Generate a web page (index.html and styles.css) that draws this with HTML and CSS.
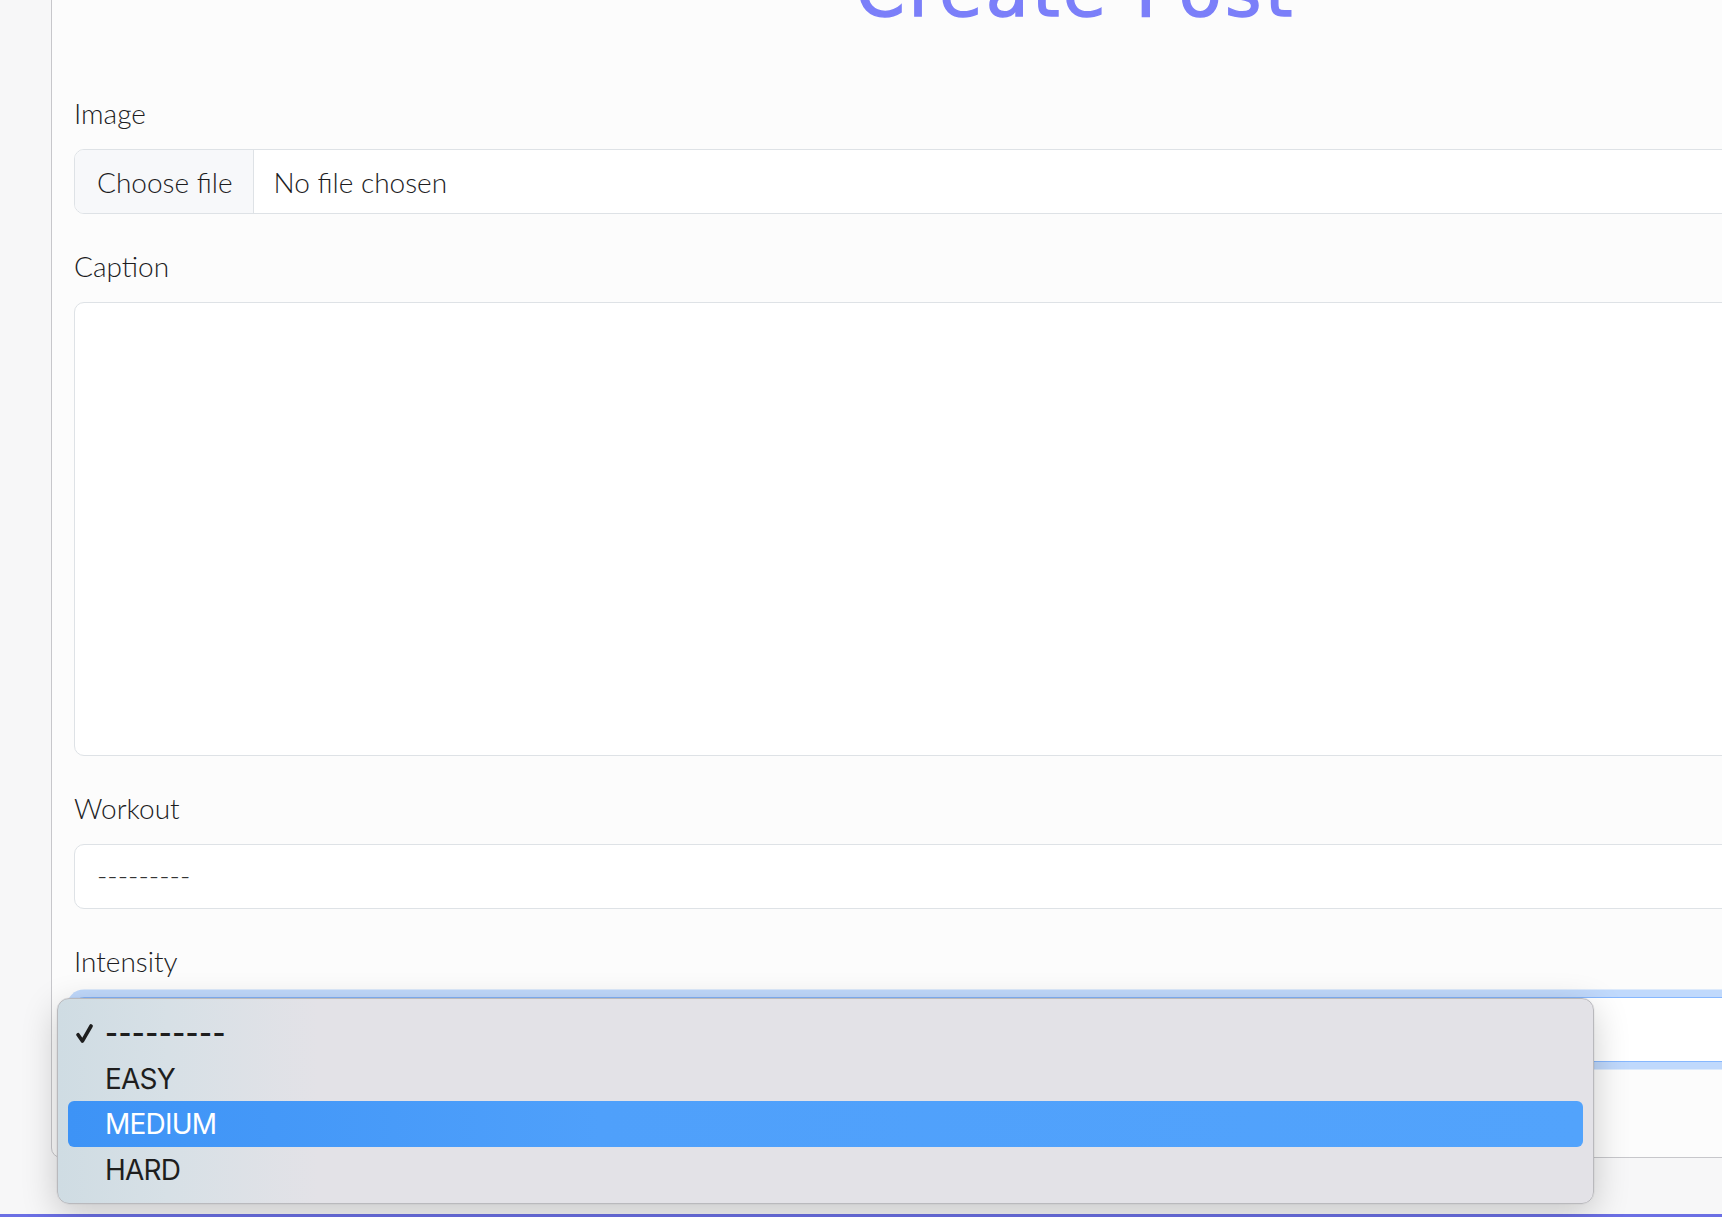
FILE: index.html
```html
<!DOCTYPE html>
<html lang="en">
<head>
  <meta charset="UTF-8">
  <meta name="viewport" content="width=device-width, initial-scale=1.0">
  <title>Create Post</title>
  <link rel="stylesheet" href="styles.css">
</head>
<body>
  <main class="page">
    <div class="post-card">
      <h1 class="post-title">Create Post</h1>

      <form class="post-form">
        <div class="field">
          <label class="field-label">Image</label>
          <div class="file-input">
            <span class="file-btn">Choose file</span>
            <span class="file-name">No file chosen</span>
          </div>
        </div>

        <div class="field">
          <label class="field-label">Caption</label>
          <textarea class="field-textarea"></textarea>
        </div>

        <div class="field">
          <label class="field-label">Workout</label>
          <div class="field-select">---------</div>
        </div>

        <div class="field">
          <label class="field-label">Intensity</label>
          <div class="select-wrap">
            <div class="field-select is-focused">---------</div>

            <!-- native popup, open -->
            <ul class="select-menu">
              <li class="menu-item is-checked">
                <svg class="check" viewBox="0 0 16 18" width="17" height="19">
                  <path d="M1.9 10.2 L6 16.2 L14.2 1.9" fill="none" stroke="#1e1e1e" stroke-width="3.4" stroke-linecap="round" stroke-linejoin="round"/>
                </svg>
                ---------
              </li>
              <li class="menu-item">EASY</li>
              <li class="menu-item is-active">MEDIUM</li>
              <li class="menu-item">HARD</li>
            </ul>
          </div>
        </div>
      </form>
    </div>
  </main>
  <footer class="site-footer"></footer>
</body>
</html>
```

FILE: styles.css
```css
html, body {
  margin: 0;
  height: 100%;
  overflow: hidden;
}
body {
  background-color: #f7f7f8;
  font-family: "Lato", "Open Sans", sans-serif;
  font-weight: 300;
  color: #1d1d1f;
}
.page {
  padding-left: 51px;
}
.post-card {
  width: 2050px;
  box-sizing: border-box;
  margin-top: -73px;
  margin-bottom: 56px;
  padding: 22px 22px 65px;
  background-color: #fcfcfc;
  border: 1px solid #c7c7cb;
  border-radius: 10px;
}
.post-title {
  margin: 0 0 57px;
  text-align: center;
  font-family: "DejaVu Sans", sans-serif;
  font-weight: 400;
  font-size: 70px;
  line-height: 84px;
  letter-spacing: 3.5px;
  color: #7b7ff9;
  -webkit-text-stroke: 1.4px #7b7ff9;
}
.field {
  margin-bottom: 30px;
}
.field-label {
  display: block;
  font-size: 28px;
  line-height: 44px;
  margin-bottom: 14px;
}
.file-input {
  display: flex;
  height: 65px;
  box-sizing: border-box;
  border: 1px solid #dee2e6;
  border-radius: 10px;
  background-color: #fff;
  overflow: hidden;
  font-size: 28px;
  line-height: 44px;
}
.file-btn {
  display: flex;
  align-items: center;
  padding: 0 20px 0 22px;
  background-color: #f7f8fa;
  border-right: 1px solid #dee2e6;
}
.file-name {
  display: flex;
  align-items: center;
  padding-left: 20px;
}
.field-textarea {
  display: block;
  width: 100%;
  height: 454px;
  box-sizing: border-box;
  border: 1px solid #dee2e6;
  border-radius: 10px;
  background-color: #fff;
  resize: none;
  font: inherit;
}
.field-select {
  height: 65px;
  box-sizing: border-box;
  padding: 0 22px;
  border: 1px solid #dee2e6;
  border-radius: 10px;
  background-color: #fff;
  font-size: 28px;
  line-height: 60px;
  color: #333;
}
.field-select.is-focused {
  border-color: #86b7fe;
  box-shadow: 0 0 0 7.5px rgba(13, 110, 253, 0.25);
}
.select-wrap {
  position: relative;
}
.select-menu {
  position: absolute;
  top: 1px;
  left: -17px;
  width: 1537px;
  box-sizing: border-box;
  margin: 0;
  padding: 11px 10px;
  list-style: none;
  background: linear-gradient(90deg, #cfdce3 0, #d7e0e6 110px, #e3e2e7 260px, #e3e2e7 100%);
  border: 1px solid #b9b9bd;
  border-radius: 12px;
  box-shadow: 0 0 0 0.5px rgba(0, 0, 0, 0.06), 0 10px 36px rgba(0, 0, 0, 0.2);
  font-family: "Inter", "Roboto", sans-serif;
  font-weight: 400;
  font-size: 28px;
  letter-spacing: -0.8px;
  color: #1e1e1e;
}
.menu-item {
  position: relative;
  height: 45.5px;
  line-height: 47px;
  padding-left: 37px;
  border-radius: 6px;
}
.menu-item.is-checked {
  font-weight: 600;
  letter-spacing: 0.4px;
}
.menu-item.is-active {
  background: linear-gradient(90deg, #3d93f6 0, #4fa0fb 35%, #52a3fc 100%);
  color: #fff;
}
.check {
  position: absolute;
  left: 8px;
  top: 14px;
}
.site-footer {
  height: 60px;
  background-color: #6b6fe4;
}
```
